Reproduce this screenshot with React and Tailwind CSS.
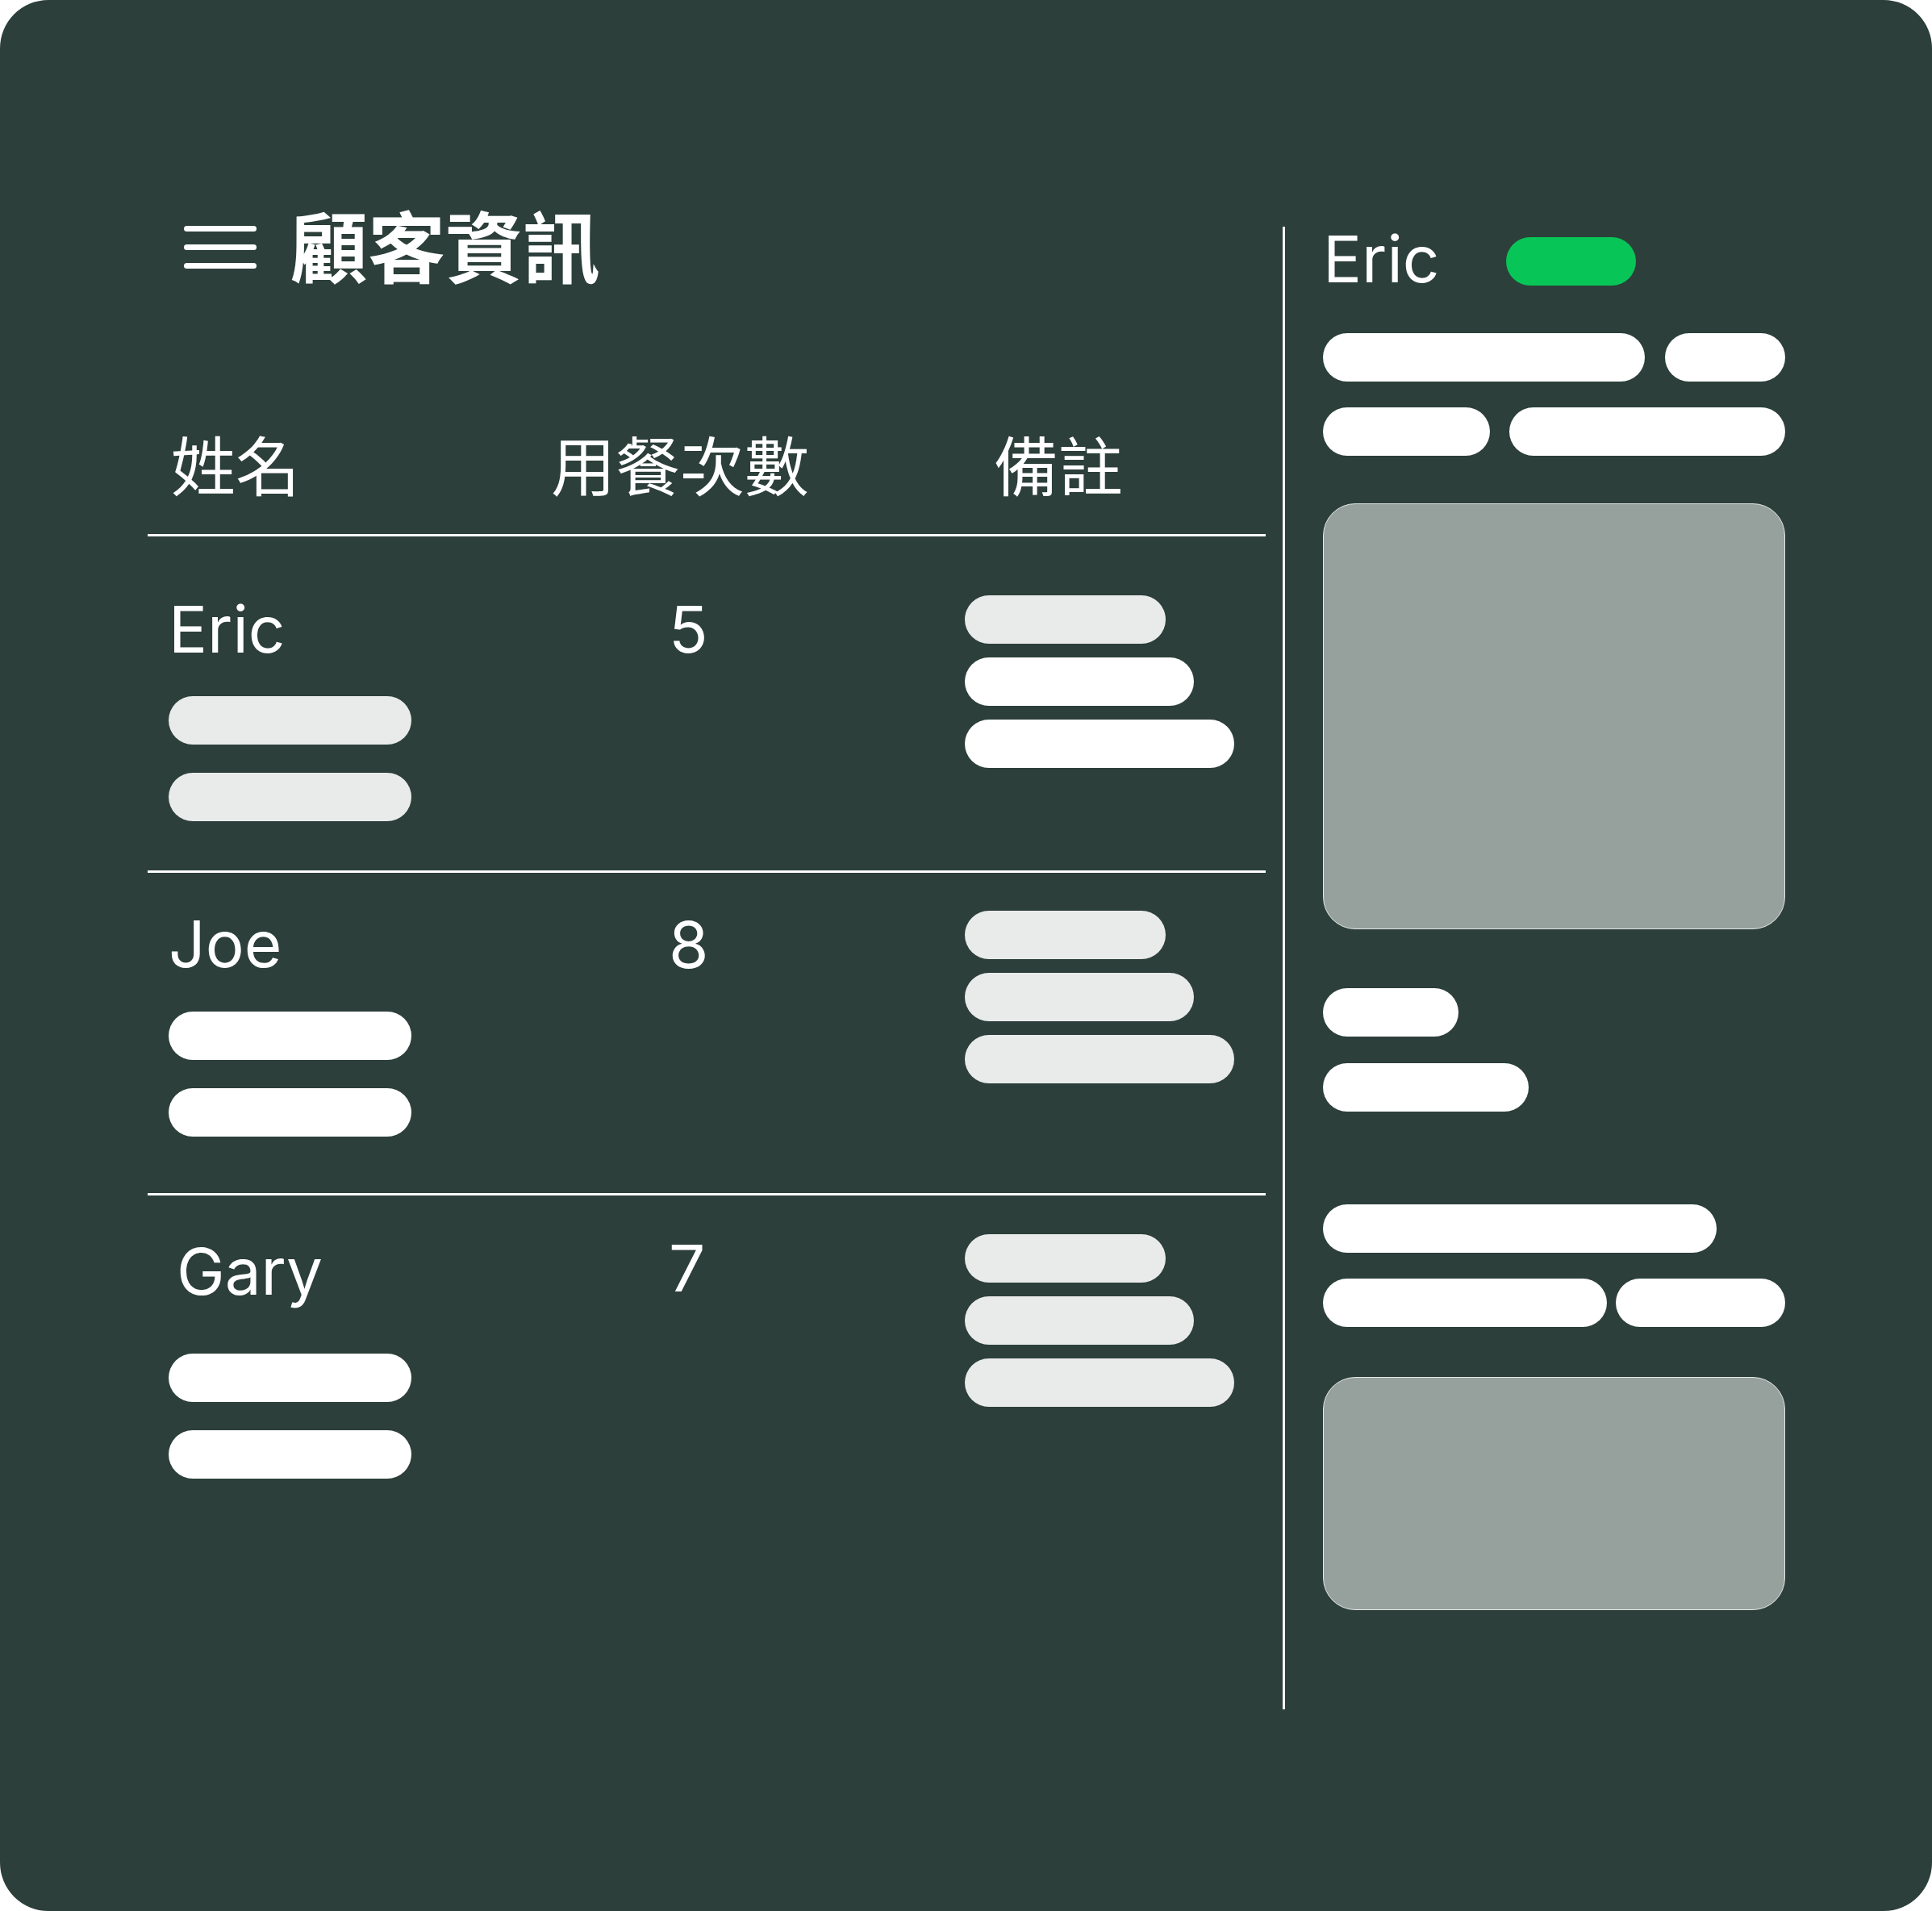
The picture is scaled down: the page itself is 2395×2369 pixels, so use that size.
import React from 'react';

const customers = [
  {
    name: 'Eric',
    count: 5,
    rowHeight: 'h-[414px]',
    nameTop: 'pt-[75px]',
    countTop: 'pt-[75px]',
    notesTop: 'pt-[73px]',
    pillGap: 'mt-[43px]',
    nameShift: '',
    namePills: ['gray', 'gray'],
    notePills: ['gray', 'white', 'white'],
  },
  {
    name: 'Joe',
    count: 8,
    rowHeight: 'h-[397px]',
    nameTop: 'pt-[48px]',
    countTop: 'pt-[49px]',
    notesTop: 'pt-[47px]',
    pillGap: 'mt-[44px]',
    nameShift: '',
    namePills: ['white', 'white'],
    notePills: ['gray', 'gray', 'gray'],
  },
  {
    name: 'Gary',
    count: 7,
    rowHeight: 'h-[420px]',
    nameTop: 'pt-[54px]',
    countTop: 'pt-[50px]',
    notesTop: 'pt-[48px]',
    pillGap: 'mt-[62px]',
    nameShift: 'ml-[10px]',
    namePills: ['white', 'white'],
    notePills: ['gray', 'gray', 'gray'],
  },
];

const noteWidths = ['w-[249px]', 'w-[284px]', 'w-[334px]'];

const Pill = ({ width, tone = 'white', className = '' }) => (
  <div
    className={`h-[60px] rounded-full ${width} ${
      tone === 'gray' ? 'bg-[#e9ebea]' : 'bg-white'
    } ${className}`}
  />
);

const MenuIcon = () => (
  <div className="mt-[8px] flex flex-col gap-[16px]">
    <div className="w-[90px] h-[7px] rounded-full bg-white" />
    <div className="w-[90px] h-[7px] rounded-full bg-white" />
    <div className="w-[90px] h-[7px] rounded-full bg-white" />
  </div>
);

const CustomerRow = ({ customer }) => (
  <div className={`grid grid-cols-[476px_511px_1fr] pl-[26px] ${customer.rowHeight}`}>
    <div className={customer.nameTop}>
      <p className={`text-[80px] leading-none text-white font-['Inter',sans-serif] ${customer.nameShift}`}>
        {customer.name}
      </p>
      <div className={`flex flex-col gap-[35px] ${customer.pillGap}`}>
        {customer.namePills.map((tone, i) => (
          <Pill key={i} width="w-[301px]" tone={tone} />
        ))}
      </div>
    </div>
    <div className={customer.countTop}>
      <p className="ml-[144px] text-[80px] leading-none text-white font-['Inter',sans-serif]">
        {customer.count}
      </p>
    </div>
    <div className={`flex flex-col gap-[17px] ${customer.notesTop}`}>
      {customer.notePills.map((tone, i) => (
        <Pill key={i} width={noteWidths[i]} tone={tone} />
      ))}
    </div>
  </div>
);

const CustomerTable = () => (
  <div className="ml-[183px] w-[1386px] pt-[254px]">
    <div className="flex items-center pl-[45px]">
      <MenuIcon />
      <h1 className="ml-[42px] text-[96px] leading-none font-bold text-white font-['Noto_Sans_CJK_TC',sans-serif]">
        顧客資訊
      </h1>
    </div>

    <div className="mt-[183px] grid grid-cols-[476px_511px_1fr] pl-[26px] text-[80px] leading-none text-white font-['Noto_Sans_CJK_TC',sans-serif]">
      <span className="ml-[3px]">姓名</span>
      <span className="ml-[-2px]">用餐次數</span>
      <span className="ml-[36px]">備註</span>
    </div>

    <div className="mt-[49px] h-[3px] bg-white" />
    {customers.map((customer, i) => (
      <div key={customer.name}>
        {i > 0 && <div className="h-[3px] bg-white" />}
        <CustomerRow customer={customer} />
      </div>
    ))}
  </div>
);

const DetailPanel = () => (
  <div className="ml-[47px] w-[573px] pt-[281px]">
    <div className="flex items-start">
      <p className="w-[227px] text-[80px] leading-none text-white font-['Inter',sans-serif]">Eric</p>
      <div className="mt-[13px] w-[161px] h-[60px] rounded-full bg-[#08c557]" />
    </div>

    <div className="mt-[52px] flex gap-[25px]">
      <Pill width="w-[399px]" />
      <Pill width="w-[149px]" />
    </div>
    <div className="mt-[32px] flex gap-[24px]">
      <Pill width="w-[207px]" />
      <Pill width="w-[342px]" />
    </div>

    <div className="mt-[59px] h-[528px] rounded-[40px] bg-[#96a09c] border border-[#e3e7e5]" />

    <Pill width="w-[168px]" className="mt-[73px]" />
    <Pill width="w-[255px]" className="mt-[33px]" />

    <Pill width="w-[488px]" className="mt-[115px]" />
    <div className="mt-[32px] flex gap-[11px]">
      <Pill width="w-[352px]" />
      <Pill width="w-[210px]" />
    </div>

    <div className="mt-[62px] h-[289px] rounded-[40px] bg-[#96a09c] border border-[#e3e7e5]" />
  </div>
);

const App = () => (
  <div className="w-[2395px] h-[2369px] bg-white">
    <div className="flex h-full rounded-[60px] bg-[#2c3f3a]">
      <CustomerTable />
      <div className="ml-[21px] mt-[281px] w-[3px] h-[1838px] bg-white" />
      <DetailPanel />
    </div>
  </div>
);

export default App;
